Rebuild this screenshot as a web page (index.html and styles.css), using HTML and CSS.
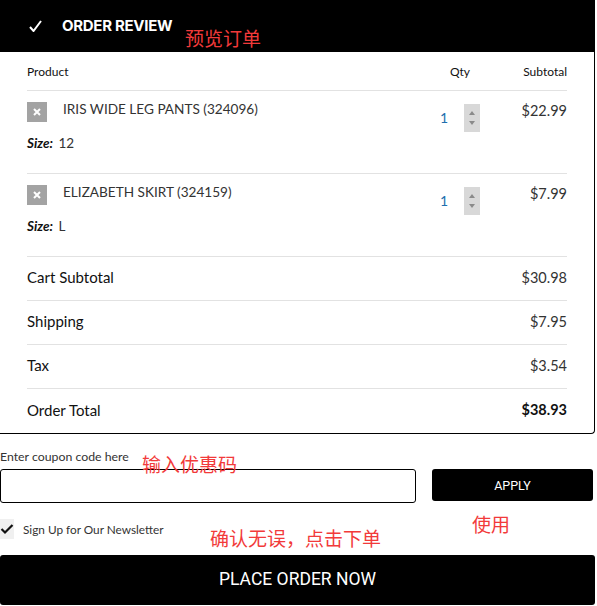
FILE: index.html
```html
<!DOCTYPE html>
<html lang="en">
<head>
    <meta charset="UTF-8">
    <meta name="viewport" content="width=device-width, initial-scale=1.0">
    <title>Order Review</title>
    <link rel="stylesheet" href="styles.css">
</head>
<body>
    <div class="review">
        <div class="review-head">
            <svg class="head-check" width="13" height="12" viewBox="0 0 13 12">
                <path d="M1 7 L4.5 11 L12 1" fill="none" stroke="#fff" stroke-width="2"/>
            </svg>
            <span class="head-title">ORDER REVIEW</span>
        </div>
        <div class="review-body">
            <div class="grid-row table-head">
                <span>Product</span>
                <span class="col-qty">Qty</span>
                <span class="col-sub">Subtotal</span>
            </div>

            <div class="grid-row item">
                <div class="item-info">
                    <div class="item-line">
                        <span class="remove">
                            <svg width="10" height="10" viewBox="0 0 10 10">
                                <path d="M2 2 L8 8 M8 2 L2 8" stroke="#fff" stroke-width="2"/>
                            </svg>
                        </span>
                        <span class="item-name">IRIS WIDE LEG PANTS (324096)</span>
                    </div>
                    <div class="item-size"><em>Size:</em> 12</div>
                </div>
                <div class="qty">
                    <span class="qty-num">1</span>
                    <span class="spinner"><i class="up"></i><i class="down"></i></span>
                </div>
                <div class="price">$22.99</div>
            </div>

            <div class="grid-row item">
                <div class="item-info">
                    <div class="item-line">
                        <span class="remove">
                            <svg width="10" height="10" viewBox="0 0 10 10">
                                <path d="M2 2 L8 8 M8 2 L2 8" stroke="#fff" stroke-width="2"/>
                            </svg>
                        </span>
                        <span class="item-name">ELIZABETH SKIRT (324159)</span>
                    </div>
                    <div class="item-size"><em>Size:</em> L</div>
                </div>
                <div class="qty">
                    <span class="qty-num">1</span>
                    <span class="spinner"><i class="up"></i><i class="down"></i></span>
                </div>
                <div class="price">$7.99</div>
            </div>

            <div class="total-row">
                <span>Cart Subtotal</span>
                <span class="amount">$30.98</span>
            </div>
            <div class="total-row">
                <span>Shipping</span>
                <span class="amount">$7.95</span>
            </div>
            <div class="total-row">
                <span>Tax</span>
                <span class="amount">$3.54</span>
            </div>
            <div class="total-row grand">
                <span>Order Total</span>
                <span class="amount">$38.93</span>
            </div>
        </div>
    </div>

    <div class="coupon">
        <div class="coupon-field">
            <label for="coupon">Enter coupon code here</label>
            <input type="text" id="coupon" name="coupon">
        </div>
        <button class="apply">APPLY</button>
    </div>

    <div class="newsletter">
        <span class="check-box">
            <svg width="14" height="12" viewBox="0 0 14 12">
                <path d="M1.5 6 L5 9.5 L12.5 2" fill="none" stroke="#111" stroke-width="2.2"/>
            </svg>
        </span>
        <span>Sign Up for Our Newsletter</span>
    </div>

    <button class="place-order">PLACE ORDER NOW</button>

    <!-- red notes drawn over the screenshot -->
    <span class="note note-review">预览订单</span>
    <span class="note note-coupon">输入优惠码</span>
    <span class="note note-apply">使用</span>
    <span class="note note-order">确认无误，点击下单</span>
</body>
</html>
```

FILE: styles.css
```css
body {
    margin: 0;
    font-family: Lato, "Open Sans", sans-serif;
    color: #222;
    background: #fff;
    position: relative;
    width: 597px;
    overflow: hidden;
}

.review {
    width: 595px;
    box-sizing: border-box;
    border-right: 1px solid #000;
    border-bottom: 1px solid #000;
    border-bottom-right-radius: 4px;
}

.review-head {
    height: 52px;
    background: #000;
    display: flex;
    align-items: center;
    padding-left: 29px;
}

.head-title {
    margin-left: 20px;
    margin-top: -2px;
    color: #fff;
    font-family: Inter, sans-serif;
    font-weight: 700;
    font-size: 15px;
    letter-spacing: -0.3px;
}

.review-body {
    padding: 0 27px;
}

.grid-row {
    display: grid;
    grid-template-columns: 1fr 60px 77px;
    border-bottom: 1px solid #e2e2e2;
}

.table-head {
    height: 38px;
    align-items: center;
    font-size: 12px;
    color: #111;
}

.col-qty {
    text-align: center;
}

.col-sub {
    text-align: right;
}

.item {
    height: 83px;
    box-sizing: border-box;
    padding-top: 11px;
    align-items: start;
}

.item-line {
    display: flex;
    align-items: flex-start;
}

.remove {
    width: 20px;
    height: 20px;
    background: #a3a3a3;
    display: flex;
    align-items: center;
    justify-content: center;
    flex-shrink: 0;
}

.item-name {
    margin-left: 16px;
    font-size: 13.6px;
    line-height: 14px;
    color: #333;
}

.item-size {
    margin-top: 12px;
    font-size: 13.5px;
    line-height: 18px;
    color: #333;
}

.item-size em {
    font-weight: 700;
    color: #111;
    margin-right: 2px;
}

.qty {
    display: flex;
    align-items: center;
    justify-content: center;
    gap: 16px;
    padding-top: 2px;
}

.qty-num {
    font-size: 14px;
    color: #1f6fae;
    margin-top: -1px;
}

.spinner {
    width: 16px;
    height: 28px;
    background: #d8d8d8;
    display: flex;
    flex-direction: column;
    align-items: center;
    justify-content: space-around;
    padding: 4px 0;
    box-sizing: border-box;
}

.spinner i {
    width: 0;
    height: 0;
    border-left: 3px solid transparent;
    border-right: 3px solid transparent;
}

.spinner .up {
    border-bottom: 4px solid #8a8a8a;
}

.spinner .down {
    border-top: 4px solid #8a8a8a;
}

.price {
    text-align: right;
    font-size: 14.5px;
    line-height: 18px;
    color: #333;
}

.total-row {
    height: 44px;
    box-sizing: border-box;
    padding-bottom: 3px;
    display: flex;
    align-items: center;
    justify-content: space-between;
    border-bottom: 1px solid #e2e2e2;
    font-size: 15px;
    color: #111;
}

.total-row .amount {
    font-size: 14.5px;
    color: #333;
}

.total-row.grand {
    border-bottom: none;
}

.total-row.grand .amount {
    font-weight: 700;
    color: #111;
}

.coupon {
    display: flex;
    align-items: flex-end;
    gap: 16px;
    margin-top: 16px;
    width: 593px;
}

.coupon-field {
    display: flex;
    flex-direction: column;
    gap: 5px;
}

.coupon-field label {
    font-size: 12.3px;
    line-height: 14px;
    color: #333;
}

.coupon-field input {
    width: 416px;
    height: 34px;
    box-sizing: border-box;
    border: 1px solid #000;
    border-radius: 3px;
    margin: 0;
}

.apply {
    flex: 1;
    height: 32px;
    margin-bottom: 2px;
    background: #000;
    color: #fff;
    border: none;
    border-radius: 3px;
    font-family: Roboto, sans-serif;
    font-size: 12.5px;
}

.newsletter {
    display: flex;
    align-items: center;
    gap: 9px;
    margin-top: 16px;
    height: 20px;
    font-size: 11.8px;
    color: #333;
}

.check-box {
    width: 14px;
    height: 20px;
    background: #f0f0f0;
    display: flex;
    align-items: center;
}

.place-order {
    display: block;
    width: 595px;
    height: 50px;
    margin-top: 16px;
    padding-bottom: 4px;
    background: #000;
    color: #fff;
    border: none;
    border-radius: 3px;
    font-family: Roboto, sans-serif;
    font-size: 17.5px;
}

.note {
    position: absolute;
    color: #f23a3a;
    font-family: "Noto Sans CJK SC", sans-serif;
    font-size: 19px;
    line-height: 22px;
    white-space: nowrap;
}

.note-review {
    left: 185px;
    top: 27px;
}

.note-coupon {
    left: 142px;
    top: 453px;
}

.note-apply {
    left: 472px;
    top: 513px;
}

.note-order {
    left: 210px;
    top: 527px;
}
```
